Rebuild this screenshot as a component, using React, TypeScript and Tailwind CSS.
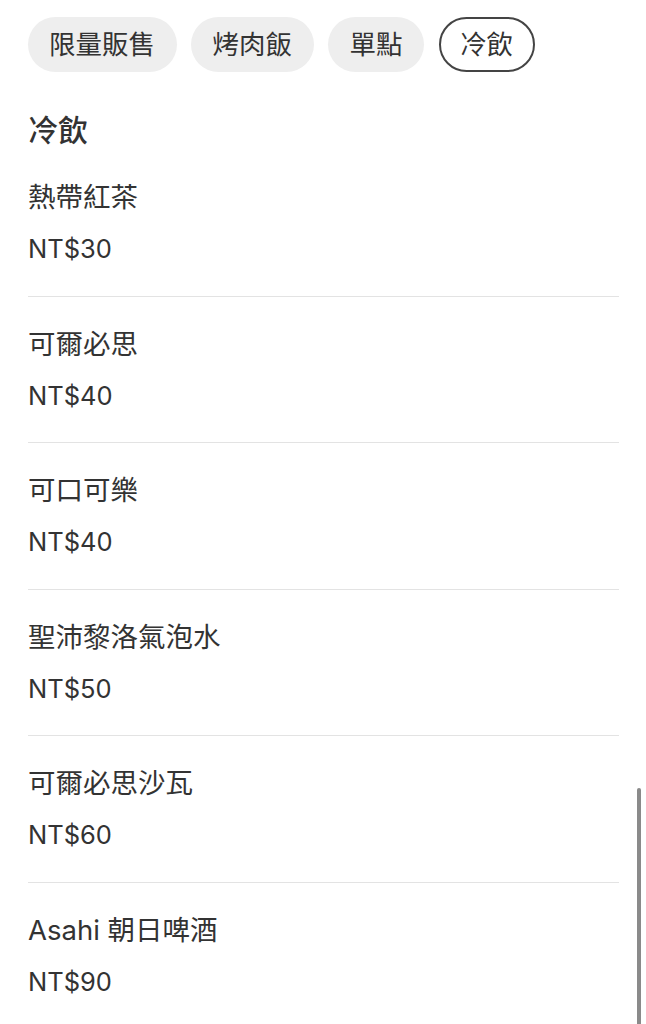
import React from 'react';

const tabs = ['限量販售', '烤肉飯', '單點', '冷飲'];

const drinks = [
  { name: '熱帶紅茶', price: 30 },
  { name: '可爾必思', price: 40 },
  { name: '可口可樂', price: 40 },
  { name: '聖沛黎洛氣泡水', price: 50 },
  { name: '可爾必思沙瓦', price: 60 },
  { name: 'Asahi 朝日啤酒', price: 90 },
];

const App = () => {
  return (
    <div className="relative w-[646px] h-[1024px] overflow-hidden bg-white text-[#333333] font-['Inter','Noto_Sans_CJK_TC',sans-serif]">
      {/* Category pills */}
      <div className="flex gap-[14.5px] pl-[27.5px] pt-[17px]">
        {tabs.map((t, i) => (
          <div
            key={t}
            className={
              i === tabs.length - 1
                ? 'h-[55px] px-[19.5px] flex items-center rounded-full border-2 border-[#444444] bg-white text-[26.5px]'
                : 'h-[55px] px-[21.5px] flex items-center rounded-full bg-[#eeeeee] text-[26.5px]'
            }
          >
            {t}
          </div>
        ))}
      </div>

      {/* Section */}
      <h2 className="mt-[38px] pl-[28px] text-[30px] leading-[40px] font-medium">冷飲</h2>

      <ul className="px-[28px] mr-[-1px]">
        {drinks.map((d) => (
          <li key={d.name} className="pt-[29px] pb-[28.5px] border-b border-[#e3e3e3]">
            <p className="text-[27.5px] leading-[36px]">{d.name}</p>
            <p className="mt-[16px] text-[25.5px] leading-[36px]">NT${d.price}</p>
          </li>
        ))}
      </ul>

      {/* Scrollbar */}
      <div className="absolute left-[637px] top-[788px] w-[4px] h-[260px] rounded-full bg-[#8a8a8a]" />
    </div>
  );
};

export default App;
